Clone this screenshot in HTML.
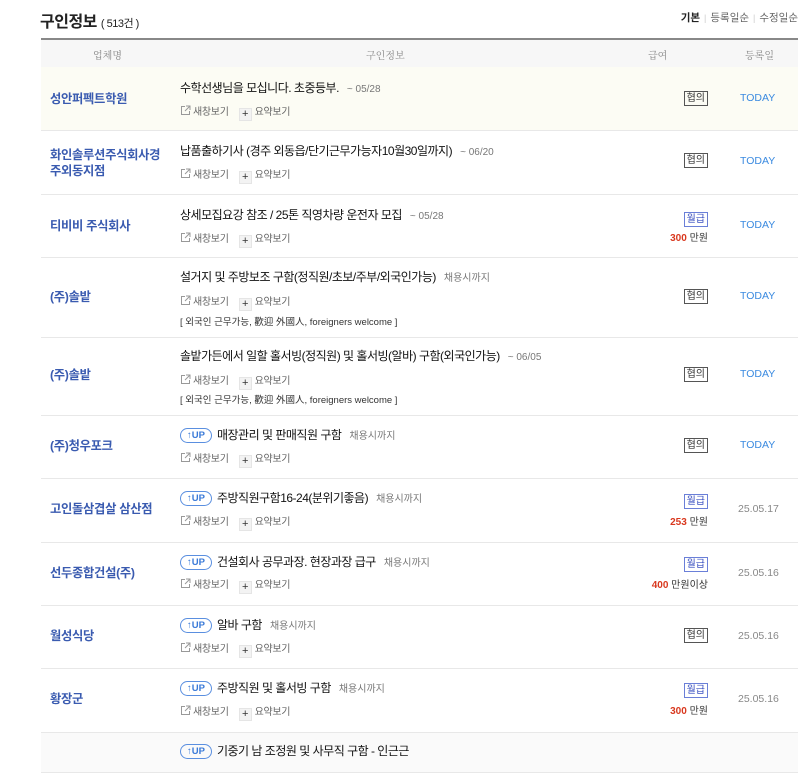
<!DOCTYPE html>
<html><head><meta charset="utf-8"><style>
*{margin:0;padding:0;box-sizing:border-box}
body{width:800px;height:746px;overflow:hidden;background:#fff;font-family:"Liberation Sans","Noto Sans CJK KR",sans-serif;color:#222;position:relative}
i{font-style:normal}
.a{position:absolute;white-space:nowrap}
.h1{left:40px;top:8px;font-size:16px;font-weight:bold;letter-spacing:-0.5px}
.h1 small{font-size:11px;font-weight:normal;margin-left:4px}
.sort{right:2px;top:10px;font-size:10.5px;color:#666}
.sort b{color:#222}
.sort i{color:#ccc;margin:0 4px;font-size:9px}
.thead{left:41px;top:38px;width:757px;height:30px;border-top:2px solid #888;background:#f7f7f7;border-bottom:1px solid #e6e6e6;font-family:"Noto Serif CJK SC",serif;font-size:10px;color:#888}
.row{position:absolute;left:41px;width:757px;border-bottom:1px solid #e8e8e8}
.co{position:absolute;left:9px;font-size:12.3px;font-weight:bold;color:#3a5bb0;line-height:16px;letter-spacing:-0.3px}
.t{position:absolute;left:139px;font-size:12px;color:#111;letter-spacing:-0.5px}
.t span{font-size:10px;color:#777;margin-left:8px;letter-spacing:0}
.up{display:inline-block;border:1px solid #5a8fe0;color:#3a7ad8;border-radius:9px;font-size:9.5px;font-weight:bold;padding:0 6px;height:15px;line-height:13px;margin-right:5px;vertical-align:1px;letter-spacing:0}
.l{position:absolute;left:139px;font-size:10px;color:#666;letter-spacing:-0.3px}
.l svg{vertical-align:-1px;margin-right:2px}
.l .pl{display:inline-block;width:13px;height:13px;background:#f3f3f3;border:1px solid #e5e5e5;text-align:center;line-height:11px;font-size:11px;color:#333;margin:0 3px 0 10px;vertical-align:-2px}
.n{position:absolute;left:139px;font-size:9.5px;color:#333}
.bd{position:absolute;right:90px;font-size:10px;border:1px solid #555;padding:0 2px;line-height:13px;color:#333}
.bd.m{border-color:#6a7fd8;color:#3a50c0}
.amt{position:absolute;right:90px;font-size:10px;color:#333}
.amt b{color:#d9381e}
.dt{position:absolute;left:697px;font-size:10.5px;color:#888}
.dt.td{color:#3a8ae0;left:699px}
</style></head><body>
<div class="a h1">구인정보<small>( 513건 )</small></div>
<div class="a sort"><b>기본</b><i>|</i>등록일순<i>|</i>수정일순</div>
<div class="a thead"><span class="a" style="left:52px;top:7px">업체명</span><span class="a" style="left:325px;top:7px">구인정보</span><span class="a" style="left:607px;top:7px">급여</span><span class="a" style="left:704px;top:7px">등록일</span></div>

<svg width="0" height="0" style="position:absolute"><defs><symbol id="ex" viewBox="0 0 11 11"><path d="M5 1.5H1.5v8h8V6" fill="none" stroke="#999" stroke-width="1"/><path d="M6 1h4v4M10 1L5 6" fill="none" stroke="#999" stroke-width="1"/></symbol></defs></svg>

<div class="row" style="top:67px;height:64px;background:#fcfcf4">
<div class="co" style="top:24px">성안퍼펙트학원</div>
<div class="t" style="top:12px">수학선생님을 모십니다. 초중등부.<span>~ 05/28</span></div>
<div class="l" style="top:36px"><svg width="11" height="11"><use href="#ex"/></svg>새창보기<i class="pl">+</i>요약보기</div>
<div class="bd" style="top:24px">협의</div><div class="dt td" style="top:25px">TODAY</div></div>

<div class="row" style="top:131px;height:64px">
<div class="co" style="top:16px">화인솔루션주식회사경<br>주외동지점</div>
<div class="t" style="top:11px">납품출하기사 (경주 외동읍/단기근무가능자10월30일까지)<span>~ 06/20</span></div>
<div class="l" style="top:35px"><svg width="11" height="11"><use href="#ex"/></svg>새창보기<i class="pl">+</i>요약보기</div>
<div class="bd" style="top:22px">협의</div><div class="dt td" style="top:24px">TODAY</div></div>

<div class="row" style="top:195px;height:63px">
<div class="co" style="top:23px">티비비 주식회사</div>
<div class="t" style="top:11px">상세모집요강 참조 / 25톤 직영차량 운전자 모집<span>~ 05/28</span></div>
<div class="l" style="top:35px"><svg width="11" height="11"><use href="#ex"/></svg>새창보기<i class="pl">+</i>요약보기</div>
<div class="bd m" style="top:17px">월급</div><div class="amt" style="top:34px"><b>300</b> 만원</div><div class="dt td" style="top:24px">TODAY</div></div>

<div class="row" style="top:258px;height:80px">
<div class="co" style="top:31px">(주)솔밭</div>
<div class="t" style="top:10px">설거지 및 주방보조 구함(정직원/초보/주부/외국인가능)<span>채용시까지</span></div>
<div class="l" style="top:35px"><svg width="11" height="11"><use href="#ex"/></svg>새창보기<i class="pl">+</i>요약보기</div>
<div class="n" style="top:56px">[ 외국인 근무가능, 歡迎 外國人, foreigners welcome ]</div>
<div class="bd" style="top:31px">협의</div><div class="dt td" style="top:32px">TODAY</div></div>

<div class="row" style="top:338px;height:78px">
<div class="co" style="top:29px">(주)솔밭</div>
<div class="t" style="top:9px">솔밭가든에서 일할 홀서빙(정직원) 및 홀서빙(알바) 구함(외국인가능)<span>~ 06/05</span></div>
<div class="l" style="top:34px"><svg width="11" height="11"><use href="#ex"/></svg>새창보기<i class="pl">+</i>요약보기</div>
<div class="n" style="top:54px">[ 외국인 근무가능, 歡迎 外國人, foreigners welcome ]</div>
<div class="bd" style="top:29px">협의</div><div class="dt td" style="top:30px">TODAY</div></div>

<div class="row" style="top:416px;height:63px">
<div class="co" style="top:22px">(주)청우포크</div>
<div class="t" style="top:10px"><i class="up">↑UP</i>매장관리 및 판매직원 구함<span>채용시까지</span></div>
<div class="l" style="top:34px"><svg width="11" height="11"><use href="#ex"/></svg>새창보기<i class="pl">+</i>요약보기</div>
<div class="bd" style="top:22px">협의</div><div class="dt td" style="top:23px">TODAY</div></div>

<div class="row" style="top:479px;height:64px">
<div class="co" style="top:22px">고인돌삼겹살 삼산점</div>
<div class="t" style="top:10px"><i class="up">↑UP</i>주방직원구함16-24(분위기좋음)<span>채용시까지</span></div>
<div class="l" style="top:34px"><svg width="11" height="11"><use href="#ex"/></svg>새창보기<i class="pl">+</i>요약보기</div>
<div class="bd m" style="top:15px">월급</div><div class="amt" style="top:34px"><b>253</b> 만원</div><div class="dt" style="top:24px">25.05.17</div></div>

<div class="row" style="top:543px;height:63px">
<div class="co" style="top:22px">선두종합건설(주)</div>
<div class="t" style="top:10px"><i class="up">↑UP</i>건설회사 공무과장. 현장과장 급구<span>채용시까지</span></div>
<div class="l" style="top:33px"><svg width="11" height="11"><use href="#ex"/></svg>새창보기<i class="pl">+</i>요약보기</div>
<div class="bd m" style="top:14px">월급</div><div class="amt" style="top:33px"><b>400</b> 만원이상</div><div class="dt" style="top:24px">25.05.16</div></div>

<div class="row" style="top:606px;height:63px">
<div class="co" style="top:22px">월성식당</div>
<div class="t" style="top:10px"><i class="up">↑UP</i>알바 구함<span>채용시까지</span></div>
<div class="l" style="top:34px"><svg width="11" height="11"><use href="#ex"/></svg>새창보기<i class="pl">+</i>요약보기</div>
<div class="bd" style="top:22px">협의</div><div class="dt" style="top:24px">25.05.16</div></div>

<div class="row" style="top:669px;height:64px">
<div class="co" style="top:22px">황장군</div>
<div class="t" style="top:10px"><i class="up">↑UP</i>주방직원 및 홀서빙 구함<span>채용시까지</span></div>
<div class="l" style="top:34px"><svg width="11" height="11"><use href="#ex"/></svg>새창보기<i class="pl">+</i>요약보기</div>
<div class="bd m" style="top:14px">월급</div><div class="amt" style="top:33px"><b>300</b> 만원</div><div class="dt" style="top:24px">25.05.16</div></div>

<div class="row" style="top:733px;height:40px;background:#fafafa">
<div class="t" style="top:9px"><i class="up">↑UP</i>기중기 남 조정원 및 사무직 구함 - 인근근</div></div>
</body></html>
